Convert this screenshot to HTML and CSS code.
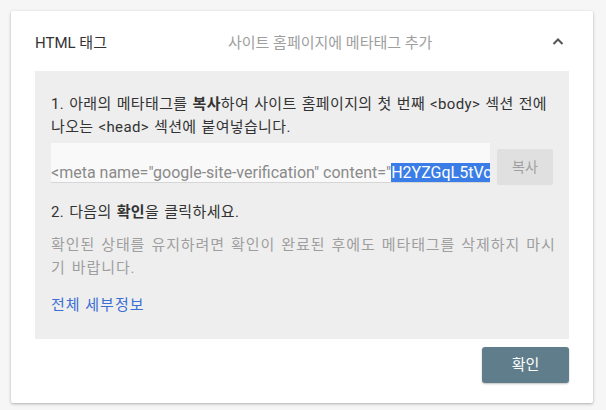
FILE: index.html
```html
<html>
<head>
  <title>HTML 태그</title>
  <meta charset="UTF-8">
  <link rel="stylesheet" href="styles.css">
</head>
<body>
  <div class="card">
    <div class="head">
      <span class="title">HTML 태그</span>
      <span class="sub">사이트 홈페이지에 메타태그 추가</span>
      <svg class="chev" width="12" height="8" viewBox="0 0 12 8"><path d="M1.5 7 L6 2.5 L10.5 7" fill="none" stroke="#555" stroke-width="2"/></svg>
    </div>
    <div class="panel">
      <p class="step">1. 아래의 메타태그를 <b>복사</b>하여 사이트 홈페이지의 첫 번째 &lt;body&gt; 섹션 전에 나오는 &lt;head&gt; 섹션에 붙여넣습니다.</p>
      <div class="copy-row">
        <div class="field"><span>&lt;meta name="google-site-verification" content="<span class="sel">H2YZGqL5tVc8kPq0wXr3</span>" /&gt;</span></div>
        <div class="copy">복사</div>
      </div>
      <p class="step second">2. 다음의 <b>확인</b>을 클릭하세요.</p>
      <p class="note">확인된 상태를 유지하려면 확인이 완료된 후에도 메타태그를 삭제하지 마시기 바랍니다.</p>
      <a class="more" href="#">전체 세부정보</a>
    </div>
    <div class="foot">
      <div class="ok">확인</div>
    </div>
  </div>
</body>
</html>
```
FILE: styles.css
```css
body {
  margin: 0;
  padding: 11px 12px 0 11px;
  background: #f6f6f6;
  font-family: Roboto, "Noto Sans CJK KR", sans-serif;
  font-size: 15px;
  color: #333;
}
.card {
  width: 582px;
  height: 392px;
  background: #fff;
  box-shadow: 0 1px 3px rgba(0, 0, 0, 0.3);
  border-radius: 2px;
}
.head {
  display: flex;
  align-items: center;
  height: 60px;
  padding: 0 29px 0 24px;
}
.title {
  width: 193px;
  color: #333;
}
.sub {
  flex: 1;
  color: #9e9e9e;
}
.chev {
  display: block;
}
.panel {
  margin: 0 24px;
  background: #eee;
  padding: 22px 4px 22px 16px;
}
p {
  margin: 0;
  line-height: 23px;
}
.step {
  letter-spacing: 0.35px;
  word-spacing: 1px;
}
b {
  font-weight: 700;
}
.copy-row {
  display: flex;
  align-items: flex-start;
  margin-top: 4px;
}
.field {
  width: 439px;
  height: 39px;
  background: #f9f9f9;
  border-bottom: 1px solid #d6d6d6;
  overflow: hidden;
  white-space: nowrap;
  color: #8a8a8a;
  font-size: 16px;
  line-height: 60px;
}
.sel {
  background: #3a7de6;
  color: #fff;
}
.copy {
  margin: 6px 0 0 7px;
  width: 56px;
  height: 36px;
  line-height: 36px;
  text-align: center;
  background: #e0e0e0;
  color: #a0a0a0;
  font-size: 14px;
  border-radius: 2px;
}
.second {
  margin-top: 16px;
}
.note {
  margin-top: 10px;
  color: #9e9e9e;
  letter-spacing: 0.9px;
  word-spacing: 1.5px;
}
.more {
  display: block;
  margin-top: 14px;
  line-height: 23px;
  color: #3b6fd4;
  text-decoration: none;
  letter-spacing: 1px;
}
.foot {
  display: flex;
  justify-content: flex-end;
  padding: 8px 24px 0;
}
.ok {
  width: 87px;
  height: 36px;
  line-height: 36px;
  text-align: center;
  background: #607d8b;
  color: #fff;
  border-radius: 3px;
  box-shadow: 0 1px 2px rgba(0, 0, 0, 0.25);
}
```
